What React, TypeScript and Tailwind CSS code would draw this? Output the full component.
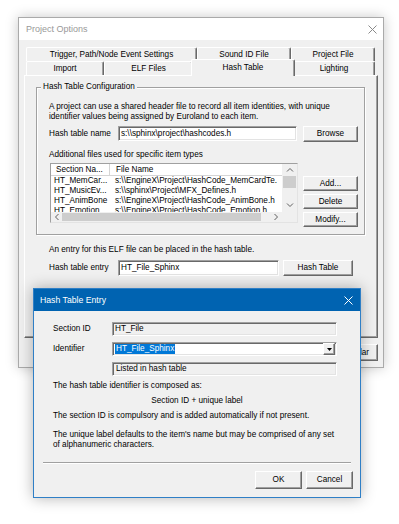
import React from "react";

const sunken =
  "border border-t-[#a0a0a0] border-l-[#a0a0a0] border-b-white border-r-white shadow-[inset_1px_1px_0_#696969,inset_-1px_-1px_0_#e3e3e3]";
const raised =
  "border border-t-white border-l-white border-b-[#696969] border-r-[#696969] shadow-[inset_-1px_-1px_0_#a0a0a0]";

function Btn(props: { children: React.ReactNode; className?: string }) {
  return (
    <button
      type="button"
      className={`flex items-center justify-center bg-[#f0f0f0] leading-[10px] ${raised} ${props.className ?? ""}`}
    >
      {props.children}
    </button>
  );
}

function Tab(props: { label: string; className: string; selected?: boolean }) {
  if (props.selected) {
    return (
      <div
        className={`relative z-10 -mx-[2px] -mb-[1px] flex h-[17px] items-center justify-center rounded-t-[2px] border-l border-t border-r border-l-white border-t-white border-r-[#696969] bg-[#f0f0f0] pb-[1px] shadow-[inset_-1px_0_0_#a0a0a0] ${props.className}`}
      >
        {props.label}
      </div>
    );
  }
  return (
    <div
      className={`flex h-[14px] items-center justify-center rounded-t-[2px] border-l border-t border-r border-l-white border-t-white border-r-[#696969] bg-[#f0f0f0] shadow-[inset_-1px_0_0_#a0a0a0] ${props.className}`}
    >
      {props.label}
    </div>
  );
}

function Chevron(props: { dir: "up" | "down" | "left" | "right" }) {
  const d = {
    up: "M1 4.5 L4 1.5 L7 4.5",
    down: "M1 1.5 L4 4.5 L7 1.5",
    left: "M4.5 1 L1.5 4 L4.5 7",
    right: "M1.5 1 L4.5 4 L1.5 7",
  }[props.dir];
  const vertical = props.dir === "up" || props.dir === "down";
  return (
    <svg
      width={vertical ? 8 : 6}
      height={vertical ? 6 : 8}
      viewBox={vertical ? "0 0 8 6" : "0 0 6 8"}
      fill="none"
      stroke="#606060"
      strokeWidth="1"
    >
      <path d={d} />
    </svg>
  );
}

function CloseX(props: { color: string }) {
  return (
    <svg width="9" height="9" viewBox="0 0 9 9" stroke={props.color} strokeWidth="1">
      <path d="M0.5 0.5 L8.5 8.5 M8.5 0.5 L0.5 8.5" />
    </svg>
  );
}

const rows = [
  ["HT_MemCar...", "s:\\\\EngineX\\Project\\HashCode_MemCardTe."],
  ["HT_MusicEv...", "s:\\\\sphinx\\Project\\MFX_Defines.h"],
  ["HT_AnimBone", "s:\\\\EngineX\\Project\\HashCode_AnimBone.h"],
  ["HT_Emotion", "s:\\\\EngineX\\Project\\HashCode_Emotion.h"],
];

function FileList() {
  return (
    <div className="ml-[1px] flex h-[60px] w-[248px] flex-col border border-t-[#a0a0a0] border-l-[#a0a0a0] border-b-[#e3e3e3] border-r-[#e3e3e3] bg-white">
      <div className="flex h-[48px]">
        <div className="flex w-[231px] flex-col">
          <div className="flex h-[12px] border-b border-[#d5d5d5]">
            <div className="w-[59px] border-r border-[#d5d5d5] pl-[5px] leading-[11px]">Section Na...</div>
            <div className="pl-[6px] leading-[11px]">File Name</div>
          </div>
          <div className="flex-1 overflow-hidden">
            {rows.map(([a, b]) => (
              <div key={a} className="flex h-[10px] leading-[10px] whitespace-nowrap">
                <div className="w-[59px] pl-[3px]">{a}</div>
                <div className="pl-[5px]">{b}</div>
              </div>
            ))}
          </div>
        </div>
        <div className="flex w-[15px] flex-col bg-[#f0f0f0]">
          <div className="flex h-[12px] items-center justify-center">
            <Chevron dir="up" />
          </div>
          <div className="mx-[1px] h-[12px] bg-[#cdcdcd]" />
          <div className="flex-1" />
          <div className="flex h-[14px] items-center justify-center">
            <Chevron dir="down" />
          </div>
        </div>
      </div>
      <div className="flex h-[10px]">
        <div className="flex w-[231px] items-center bg-[#f0f0f0]">
          <div className="flex w-[11px] items-center justify-center">
            <Chevron dir="left" />
          </div>
          <div className="h-[8px] w-[199px] bg-[#cdcdcd]" />
          <div className="flex-1" />
          <div className="flex w-[12px] items-center justify-center">
            <Chevron dir="right" />
          </div>
        </div>
        <div className="w-[15px] bg-[#f0f0f0]" />
      </div>
    </div>
  );
}

function ProjectOptions() {
  return (
    <div className="absolute left-[18px] top-[17px] flex h-[351px] w-[366px] flex-col border border-[#aaaaaa] bg-[#f0f0f0] shadow-[0_0_12px_rgba(0,0,0,0.22)]">
      <div className="flex h-[22px] items-center justify-between bg-white pl-[7px] pr-[6px]">
        <span className="text-[9px] text-[#999999]">Project Options</span>
        <CloseX color="#8a8a8a" />
      </div>
      <div className="flex flex-col px-[5px] pt-[7px]">
        <div className="ml-[2px] flex h-[14px]">
          <Tab label="Trigger, Path/Node  Event Settings" className="w-[171px]" />
          <Tab label="Sound ID File" className="w-[94px]" />
          <Tab label="Project File" className="w-[84px]" />
        </div>
        <div className="ml-[2px] flex h-[14px] items-end">
          <Tab label="Import" className="w-[78px]" />
          <Tab label="ELF Files" className="w-[89px]" />
          <Tab label="Hash Table" className="w-[104px]" selected />
          <Tab label="Lighting" className="w-[82px]" />
        </div>
        <div className="flex h-[263px] flex-col border border-t-white border-l-white border-r-[#696969] border-b-[#696969] pl-[11px] pt-[11px] shadow-[inset_-1px_-1px_0_#a0a0a0]">
          <div className="relative flex h-[148px] w-[329px] flex-col border border-[#a0a0a0] pl-[12px] pt-[14px] shadow-[1px_1px_0_#ffffff,inset_1px_1px_0_#ffffff]">
            <span className="absolute left-[4px] top-[-6px] bg-[#f0f0f0] px-[2px] leading-[10px]">
              Hash Table Configuration
            </span>
            <p className="whitespace-nowrap leading-[10px]">
              A project can use a shared header file to record all item identities, with unique
              <br />
              identifier values being assigned by Euroland to each item.
            </p>
            <div className="mt-[4px] flex h-[16px] items-center">
              <span className="w-[69px]">Hash table name</span>
              <div className={`flex h-[15px] w-[179px] items-center self-start bg-white pl-[2px] ${sunken}`}>
                {"s:\\\\sphinx\\project\\hashcodes.h"}
              </div>
              <Btn className="ml-[6px] h-[16px] w-[55px]">Browse</Btn>
            </div>
            <p className="mt-[8px] leading-[10px]">Additional files used for specific item types</p>
            <div className="mt-[3px] flex">
              <FileList />
              <div className="ml-[5px] mt-[13px] flex flex-col gap-[3px]">
                <Btn className="h-[15px] w-[55px]">Add...</Btn>
                <Btn className="h-[15px] w-[55px]">Delete</Btn>
                <Btn className="h-[15px] w-[55px]">Modify...</Btn>
              </div>
            </div>
          </div>
          <div className="flex flex-col pl-[13px]">
            <p className="mt-[10px] leading-[10px]">An entry for this ELF file can be placed in the hash table.</p>
            <div className="mt-[5px] flex h-[16px] items-center">
              <span className="w-[69px]">Hash table entry</span>
              <div className={`flex h-[16px] w-[161px] items-center bg-white pl-[2px] ${sunken}`}>
                HT_File_Sphinx
              </div>
              <Btn className="ml-[4px] h-[16px] w-[70px]">Hash Table</Btn>
            </div>
          </div>
        </div>
        <div className="mt-[6px] flex justify-end gap-[4px]">
          <Btn className="h-[17px] w-[46px]">OK</Btn>
          <Btn className="h-[17px] w-[46px]">Cancel</Btn>
          <Btn className="h-[17px] w-[46px]">Popular</Btn>
        </div>
      </div>
    </div>
  );
}

function HashTableEntry() {
  return (
    <div className="absolute left-[33px] top-[288px] flex h-[210px] w-[328px] flex-col border border-[#2f7fc6] bg-[#f0f0f0] shadow-[0_0_14px_rgba(0,0,0,0.3)]">
      <div className="flex h-[22px] items-center justify-between bg-[#0063b1] pl-[6px] pr-[7px] text-white">
        <span className="text-[8.7px]">Hash Table Entry</span>
        <CloseX color="#ffffff" />
      </div>
      <div className="flex flex-col pl-[19px] pt-[11px]">
        <div className="flex flex-col gap-[6px]">
          <div className="flex h-[14px] items-center">
            <span className="w-[59px]">Section ID</span>
            <div className={`flex h-[14px] w-[225px] items-center pl-[2px] ${sunken}`}>HT_File</div>
          </div>
          <div className="flex h-[14px] items-center">
            <span className="w-[59px]">Identifier</span>
            <div className={`flex h-[14px] w-[225px] items-center bg-white p-[1px] pl-[2px] ${sunken}`}>
              <span className="flex h-[10px] items-center bg-[#0078d7] px-[1px] text-white">HT_File_Sphinx</span>
              <div className="flex-1" />
              <div className={`flex h-[12px] w-[12px] items-center justify-center bg-[#f0f0f0] ${raised}`}>
                <svg width="5" height="3" viewBox="0 0 5 3">
                  <path d="M0 0 H5 L2.5 3 Z" fill="#000" />
                </svg>
              </div>
            </div>
          </div>
          <div className="flex h-[14px] items-center">
            <span className="w-[59px]" />
            <div className={`flex h-[14px] w-[225px] items-center pl-[3px] ${sunken}`}>Listed in hash table</div>
          </div>
        </div>
        <p className="mt-[5px] leading-[10px]">The hash table identifier is composed as:</p>
        <p className="-ml-[19px] mt-[5px] text-center leading-[10px]">Section ID + unique label</p>
        <p className="mt-[5px] leading-[10px]">The section ID is compulsory and is added automatically if not present.</p>
        <p className="mt-[9px] whitespace-nowrap leading-[10px]">
          The unique label defaults to the item's name but may be comprised of any set
          <br />
          of alphanumeric characters.
        </p>
      </div>
      <div className="mx-[9px] mt-[12px] h-[2px] border-t border-b border-t-[#a0a0a0] border-b-white" />
      <div className="mt-[7px] flex justify-end gap-[4px] pr-[7px]">
        <Btn className="h-[18px] w-[47px]">OK</Btn>
        <Btn className="h-[18px] w-[47px]">Cancel</Btn>
      </div>
    </div>
  );
}

export default function App() {
  return (
    <div className="relative h-[524px] w-[399px] overflow-hidden bg-white font-['Liberation_Sans',Arial,sans-serif] text-[8.2px] leading-[10px] text-black">
      <ProjectOptions />
      <HashTableEntry />
    </div>
  );
}
